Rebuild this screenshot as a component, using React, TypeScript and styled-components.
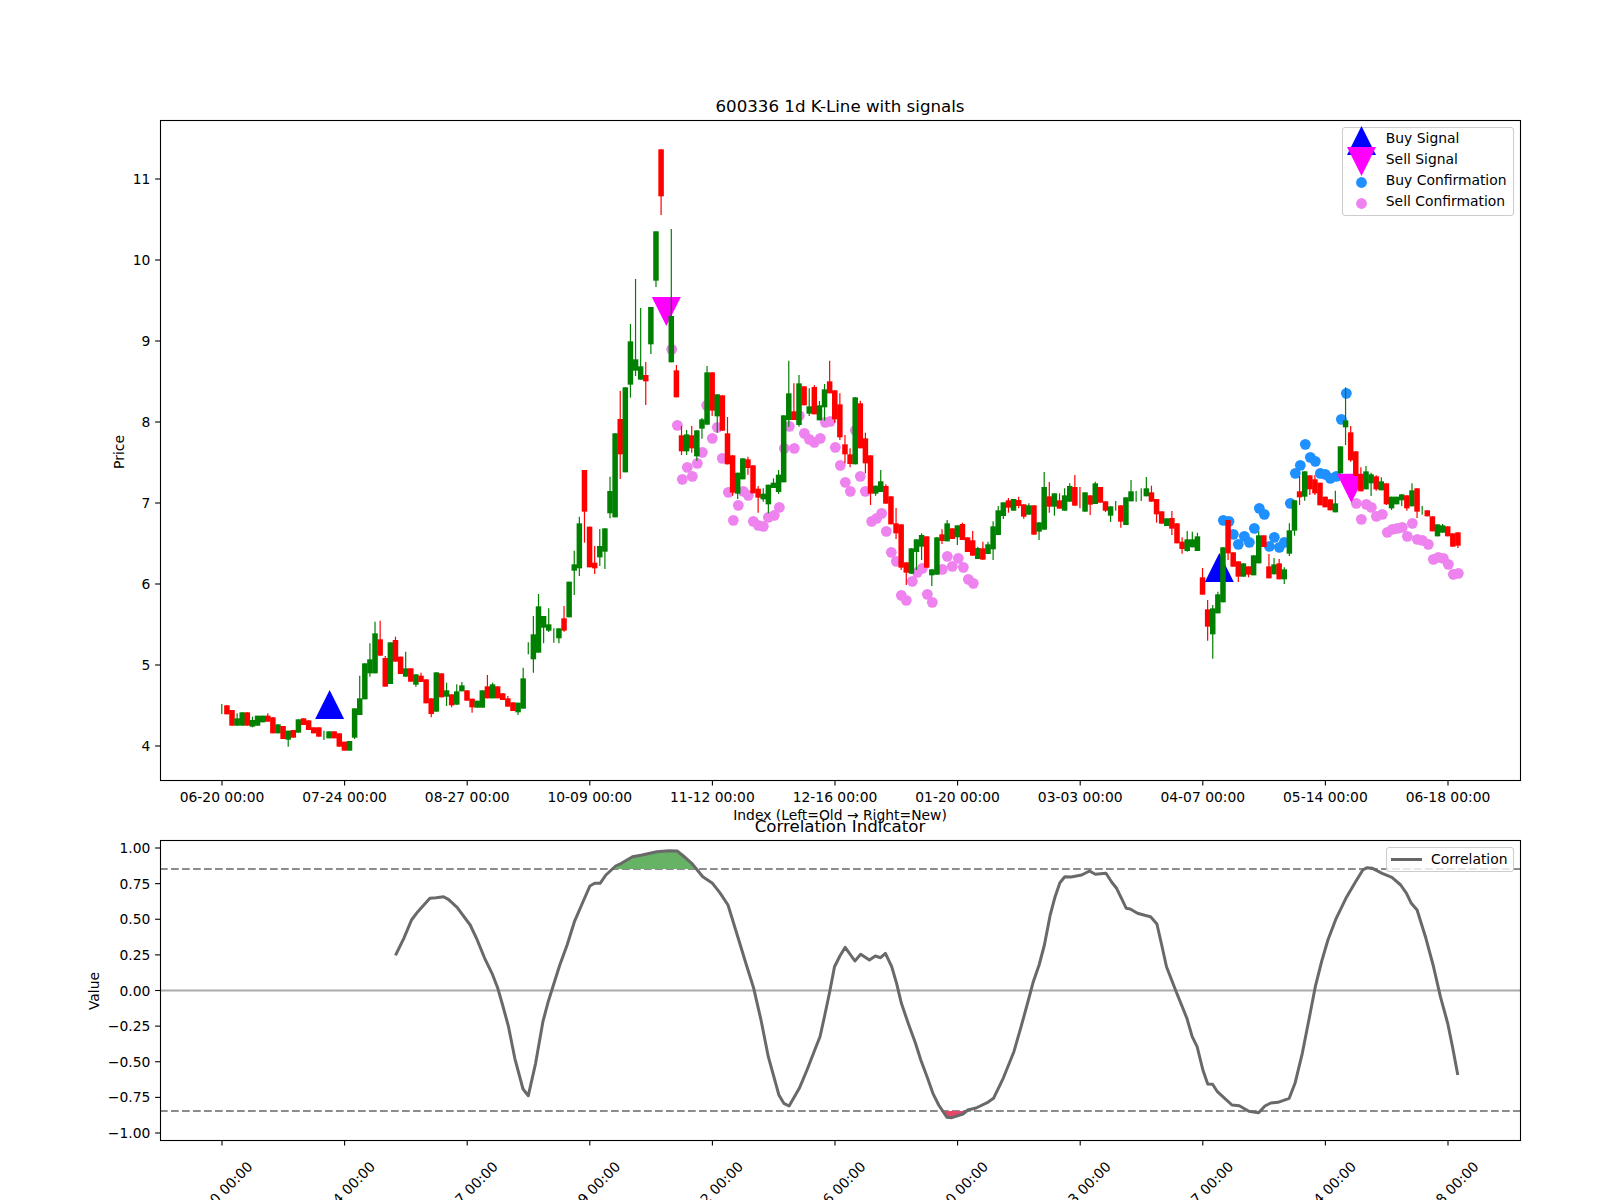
import { FC } from 'react'
import styled, { createGlobalStyle } from 'styled-components'

const GlobalStyle = createGlobalStyle`
  html, body { margin: 0; padding: 0; background: #fff; }
`

const Figure = styled.div`
  width: 1600px;
  height: 1200px;
  overflow: hidden;
  display: flex;
  flex-direction: column;
  align-items: flex-start;
  padding: 95px 0 0 160px;
  box-sizing: border-box;
  font-family: "DejaVu Sans", sans-serif;
  color: #000;
`
const Title = styled.h2<{ $gap?: number }>`
  width: 1360px;
  height: 24px;
  margin: ${p => p.$gap || 0}px 0 1px;
  font-size: 16.67px;
  line-height: 24px;
  font-weight: 400;
  text-align: center;
  white-space: nowrap;
`
const Plot = styled.div<{ $height: number }>`
  position: relative;
  width: 1360px;
  height: ${p => p.$height}px;
  flex: none;
`
const PlotSvg = styled.svg`
  display: block;
  width: 100%;
  height: 100%;
  overflow: visible;
  font-family: "DejaVu Sans", sans-serif;
  font-size: 13.89px;
`
const Legend = styled.div<{ $signals?: boolean }>`
  position: absolute;
  top: 7px;
  right: 6.5px;
  display: grid;
  grid-template-columns: ${p => (p.$signals ? 30 : 31)}px auto;
  grid-auto-rows: 20.85px;
  column-gap: 9px;
  padding: ${p => (p.$signals ? '0 6px 3.5px 4px' : '1px 5px 1px 4px')};
  background: rgba(255, 255, 255, 0.8);
  border: 1px solid #ccc;
  border-radius: 3px;
  font-size: 13.89px;
  line-height: 20.85px;
  white-space: nowrap;
`
const LegendMark = styled.svg`
  width: 31px;
  height: 31px;
  overflow: visible;
  align-self: center;
  margin: 5px 0 0 -1px;
`
const LegendLine = styled.span`
  height: 2.8px;
  background: #666;
  align-self: center;
`

// c, body top, body bottom, wick top, wick bottom (0 = same as the body), read off the picture at 3x
type Candle = [string, number, number, number?, number?]

const trace = (y0: number, rows: Candle[]) =>
  rows.map(([c, bt, bb, wt, wb]) => ({
    color: c === 'r' ? '#ff0000' : '#008000',
    top: y0 + bt / 3,
    bottom: y0 + bb / 3,
    high: y0 + (wt || bt) / 3,
    low: y0 + (wb || bb) / 3,
  }))

const candles = [
  ...trace(480, [
    ['g', 0, 0, 672, 702], ['r', 676, 703], ['r', 690, 737], ['g', 715, 737, 700], ['g', 697, 737],
    ['r', 697, 737], ['g', 720, 740, 710, 742], ['g', 707, 737], ['g', 707, 727], ['r', 707, 725, 700],
    ['r', 712, 760], ['g', 733, 760], ['r', 738, 777], ['g', 752, 779, 0, 800], ['r', 750, 773],
    ['g', 718, 758], ['r', 715, 735], ['r', 721, 750], ['r', 742, 760], ['r', 742, 770],
    ['g', 0, 0, 752, 780], ['g', 754, 775], ['r', 754, 775], ['r', 760, 800], ['r', 785, 812],
    ['g', 783, 812], ['g', 685, 773, 0, 777], ['g', 655, 705, 587], ['g', 550, 658], ['g', 538, 580, 490, 590],
    ['g', 460, 580, 425], ['r', 478, 527, 422], ['r', 534, 620, 528], ['g', 487, 612], ['r', 480, 545, 470],
    ['r', 530, 582], ['g', 565, 590, 515], ['r', 565, 605], ['g', 583, 614, 0, 620], ['r', 587, 606, 578],
    ['r', 598, 670], ['r', 655, 702, 0, 712], ['g', 577, 695], ['r', 580, 652], ['g', 631, 650, 608, 678],
    ['r', 643, 676, 0, 682], ['g', 634, 674, 613], ['g', 616, 634, 606], ['r', 631, 662], ['r', 656, 682, 0, 698],
    ['g', 662, 683], ['g', 631, 683], ['r', 619, 655, 585], ['g', 613, 655, 608], ['r', 619, 655],
    ['r', 640, 660], ['r', 655, 680, 648], ['r', 667, 693], ['g', 668, 697, 0, 705], ['g', 595, 686, 563],
    ['g', 0, 0, 487, 523], ['g', 463, 538, 408, 578], ['g', 379, 518, 342], ['g', 408, 443, 410, 490],
    ['g', 433, 452, 385, 456], ['g', 0, 0, 445, 488], ['g', 445, 475, 0, 490], ['r', 415, 452, 378, 455],
    ['g', 305, 412], ['g', 253, 272, 212, 345], ['g', 130, 265, 110, 288], ['r', -30, 95, 0, 188],
    ['r', 140, 262], ['r', 248, 265, 198, 282], ['g', 198, 232, 147, 258], ['g', 145, 215, 0, 267],
  ]),
  ...trace(130, [
    ['g', 1083, 1150, 1040, 1165], ['g', 910, 1162], ['r', 867, 973, 783, 1047], ['g', 772, 1027],
    ['g', 634, 764, 582, 803], ['g', 688, 722, 447, 738], ['g', 709, 749, 534], ['r', 735, 754, 696, 825],
    ['g', 531, 643, 0, 672], ['g', 304, 452, 0, 471], ['r', 58, 199, 0, 255], ['g', 0, 0, -1, -1],
    ['g', 558, 697, 297], ['r', 721, 802, 705], ['r', 916, 964, 888, 975], ['g', 913, 964, 900, 975],
    ['r', 916, 955, 888, 968], ['g', 901, 979, 0, 992], ['g', 868, 896, 864, 926], ['g', 727, 884, 708],
    ['r', 727, 842, 0, 858], ['g', 793, 859, 0, 908], ['r', 796, 902], ['r', 910, 1003, 861],
    ['r', 976, 1088, 0, 1097], ['g', 1028, 1091, 0, 1107], ['g', 985, 1048], ['r', 988, 1014, 980, 1034],
    ['r', 1006, 1090], ['r', 1076, 1103, 1068, 1148], ['g', 1091, 1108, 1075, 1115], ['g', 1064, 1123, 0, 1150],
    ['g', 1058, 1074, 1045], ['g', 1034, 1086, 1020, 1092], ['g', 856, 1057], ['g', 790, 870, 692, 890],
    ['r', 844, 870, 760], ['g', 760, 885, 735, 890], ['r', 769, 826], ['g', 829, 851, 775, 858],
    ['r', 771, 853, 765], ['g', 826, 871, 813], ['g', 778, 832, 762, 872], ['r', 754, 790, 692],
    ['r', 781, 868, 0, 878], ['r', 823, 922, 790, 930], ['r', 943, 973, 915, 1000], ['r', 973, 1002, 955, 1012],
    ['g', 802, 1003], ['r', 820, 955, 812], ['r', 925, 1000, 908, 1030], ['r', 976, 1091, 0, 1125],
    ['g', 1067, 1091, 0, 1097],
  ]),
  ...trace(340, [
    ['g', 424, 456, 390], ['r', 438, 491, 433], ['r', 469, 553], ['r', 550, 580, 504, 597], ['r', 553, 683, 0, 690],
    ['r', 667, 698, 0, 735], ['g', 625, 701], ['g', 598, 636, 0, 690], ['g', 585, 620, 580, 660], ['r', 589, 683],
    ['g', 688, 706, 0, 738], ['g', 592, 704], ['r', 583, 603, 568, 612], ['g', 550, 604, 540], ['r', 565, 597],
    ['g', 556, 592, 0, 615], ['r', 552, 600, 548], ['r', 592, 636], ['r', 601, 647, 573], ['g', 624, 657, 620],
    ['r', 625, 659, 605], ['g', 613, 642, 605], ['g', 559, 628, 544, 660], ['g', 511, 585, 498], ['g', 487, 528, 0, 537],
    ['r', 481, 503, 474, 518], ['g', 477, 512], ['r', 480, 498, 470, 505], ['r', 493, 530, 0, 536], ['g', 496, 524, 490],
    ['r', 496, 584], ['g', 547, 575, 0, 600], ['g', 441, 569, 396], ['r', 469, 500, 426, 518], ['g', 460, 500, 0, 527],
    ['r', 481, 506, 460], ['g', 466, 512, 445], ['g', 438, 485, 430], ['r', 441, 497, 405], ['r', 0, 0, 441, 505],
    ['g', 457, 515], ['r', 466, 494, 0, 525], ['g', 430, 492, 425], ['r', 441, 488], ['r', 484, 512, 0, 516],
    ['g', 499, 527, 0, 546], ['g', 0, 0, 483, 512], ['r', 496, 545, 0, 563], ['g', 472, 555], ['g', 454, 484, 420],
    ['g', 0, 0, 453, 485], ['g', 0, 0, 445, 483], ['g', 445, 469, 411], ['r', 457, 485, 437], ['r', 477, 523, 0, 548],
    ['r', 514, 551], ['g', 535, 558], ['r', 534, 566, 513, 585], ['r', 550, 610], ['r', 605, 627, 592, 641],
    ['g', 598, 633, 573, 635], ['g', 598, 622, 575], ['g', 589, 633, 578],
  ]),
  ...trace(370, [
    ['r', 622, 674, 594], ['r', 718, 770, 690, 812], ['g', 715, 793, 705, 866], ['g', 673, 730, 665], ['g', 532, 697],
    ['r', 450, 550, 0, 570], ['r', 547, 590], ['r', 574, 620, 0, 636], ['g', 580, 620], ['r', 589, 614, 0, 622],
    ['g', 556, 616], ['g', 496, 580, 484], ['r', 496, 531], ['r', 589, 625, 552], ['g', 583, 613, 564],
    ['r', 580, 628, 567], ['g', 598, 628, 592, 642], ['g', 481, 551, 460, 558], ['g', 391, 482, 0, 497],
    ['r', 364, 382, 318, 405], ['g', 304, 380, 0, 392], ['r', 316, 358, 0, 375], ['r', 328, 370, 315, 375],
    ['r', 338, 406], ['r', 380, 412], ['r', 388, 421], ['g', 400, 427, 362], ['g', 229, 310],
    ['g', 151, 172, 52, 225], ['r', 187, 271, 168, 275], ['r', 244, 318], ['r', 313, 364, 292], ['g', 304, 358, 288],
    ['g', 313, 340, 308, 378], ['r', 319, 358, 316, 362], ['g', 334, 361, 322], ['r', 340, 403, 0, 405],
    ['g', 380, 415, 0, 420], ['g', 380, 403], ['g', 373, 391, 0, 408], ['r', 376, 415, 0, 422], ['g', 361, 409, 340],
    ['r', 355, 425, 0, 444], ['g', 0, 0, 408, 434], ['r', 421, 439], ['r', 439, 484], ['g', 463, 499],
    ['g', 466, 488, 462], ['r', 469, 499], ['r', 490, 530], ['r', 487, 527, 0, 534],
  ]),
]

const dots = (x0: number, y0: number, pts: number[][]) => pts.map(([x, y]) => [x0 + x / 3, y0 + y / 3])

const sellDots = [
  ...dots(580, 130, [
    [275, 658], [292, 886], [322, 1012], [307, 1048], [337, 1039], [352, 1000], [367, 967], [397, 925], [412, 892],
    [380, 826], [427, 985], [445, 1087], [475, 1126], [460, 1171], [490, 1084], [505, 1096], [520, 1174], [535, 1186],
    [550, 1189], [565, 1162], [583, 1156], [598, 1132], [613, 955], [643, 955], [628, 889], [658, 857], [673, 910],
    [688, 928], [703, 937], [721, 925], [736, 877], [751, 874], [766, 952], [781, 1006], [796, 1057], [811, 1084],
    [841, 1039], [826, 901], [856, 1084], [875, 1174], [890, 1165], [905, 1150],
  ]),
  ...dots(860, 340, [
    [79, 574], [94, 637], [109, 664], [124, 766], [139, 781], [157, 724], [172, 697], [187, 685], [202, 763], [217, 787],
    [247, 688], [262, 649], [277, 679], [295, 655], [310, 682], [325, 718], [340, 730],
  ]),
  ...dots(1180, 370, [
    [529, 400], [544, 448], [559, 403], [574, 412], [589, 439], [607, 433], [622, 487], [637, 478], [652, 475], [667, 472],
    [682, 499], [697, 460], [712, 508], [727, 511], [745, 523], [760, 568], [775, 562], [790, 565], [805, 583], [820, 613],
    [835, 610],
  ]),
]

const buyDots = dots(1180, 370, [
  [130, 451], [147, 454], [160, 493], [175, 523], [193, 499], [208, 517], [223, 475], [238, 415], [253, 433], [268, 529],
  [283, 502], [298, 532], [313, 517], [331, 400], [346, 310], [361, 286], [376, 223], [391, 262], [406, 274], [421, 310],
  [436, 313], [451, 325], [469, 319], [484, 148], [499, 70],
])

const curve = (x0: number, pts: number[][]) => pts.map(([x, y]) => [x0 + x / 2.0632, 770 + y / 3])

const correlation = [
  ...curve(80, [
    [651, 556], [668, 505], [684, 450], [697, 425], [722, 385], [735, 383], [750, 380], [760, 388], [778, 412], [805, 465],
    [818, 505], [835, 565], [850, 610], [862, 655], [872, 705], [884, 770], [897, 865], [914, 957], [925, 977], [940, 880],
    [955, 755], [966, 695], [978, 640], [990, 585], [1005, 525], [1020, 455], [1035, 405], [1052, 348], [1062, 340],
    [1073, 340], [1085, 315], [1105, 288], [1117, 280], [1140, 260], [1160, 255], [1190, 245], [1215, 242], [1232, 243],
    [1245, 258], [1262, 280], [1285, 320], [1305, 340], [1320, 368], [1337, 405], [1355, 490], [1375, 585], [1390, 655],
    [1405, 750], [1420, 860], [1442, 975], [1452, 1000], [1463, 1008], [1484, 955], [1500, 900], [1520, 825],
  ]),
  ...curve(820, [
    [0, 800], [10, 735], [20, 665], [30, 590], [41, 558], [52, 532], [72, 573], [84, 553], [102, 570], [114, 558], [125, 563],
    [135, 550], [148, 590], [158, 640], [168, 700], [182, 760], [197, 820], [208, 870], [222, 925], [233, 970], [245, 1005],
    [262, 1042], [272, 1043], [295, 1032], [305, 1020], [322, 1014], [345, 998], [358, 985], [378, 925], [400, 845],
    [415, 770], [430, 690], [440, 635], [452, 585], [463, 525], [475, 435], [485, 380], [495, 338], [505, 320], [518, 321],
    [540, 315], [556, 303], [568, 313], [590, 310], [602, 337], [612, 355], [622, 385], [632, 415], [640, 417], [655, 430],
    [670, 436], [682, 440], [695, 462], [705, 525], [715, 590], [735, 665], [757, 745], [768, 800], [778, 830], [790, 900],
    [800, 942], [810, 943], [820, 965], [835, 985], [850, 1005], [865, 1007], [885, 1024], [905, 1028], [918, 1008],
    [930, 999], [945, 997], [968, 985], [980, 940], [995, 850], [1010, 740], [1022, 650], [1035, 575], [1048, 510],
    [1065, 445], [1085, 385], [1105, 335], [1120, 300], [1128, 293], [1140, 295], [1160, 310], [1180, 322], [1198, 345],
    [1210, 370], [1220, 400], [1232, 420], [1250, 505], [1265, 585], [1280, 680], [1295, 760], [1305, 830], [1316, 915],
  ]),
]

const toPoints = (pts: number[][]) => pts.map(([x, y]) => `${x.toFixed(1)},${y.toFixed(1)}`).join(' ')

const overBand = [[614.6, 869], ...correlation.filter(([x, y]) => x > 610 && x < 700 && y < 869), [695.5, 869]]
const underBand = [[944.5, 1111], ...correlation.filter(([x, y]) => x > 940 && x < 970 && y > 1111), [964.5, 1111]]

const dateLabels = [
  '06-20 00:00', '07-24 00:00', '08-27 00:00', '10-09 00:00', '11-12 00:00', '12-16 00:00',
  '01-20 00:00', '03-03 00:00', '04-07 00:00', '05-14 00:00', '06-18 00:00',
]
const tickX = (n: number) => 222 + n * 122.6

const priceY = (v: number) => 179 + (11 - v) * 81
const prices = [4, 5, 6, 7, 8, 9, 10, 11]
const values = [1, 0.75, 0.5, 0.25, 0, -0.25, -0.5, -0.75, -1]
const valueY = (v: number) => 990.5 - v * 142.5
const valueLabel = (v: number) => (v < 0 ? '\u2212' : '') + Math.abs(v).toFixed(2)

const SEGMENT = 5.108

const BuyMark: FC<{ x: number; y: number }> = ({ x, y }) => (
  <polygon points={`${x},${y} ${x - 14.5},${y + 29} ${x + 14.5},${y + 29}`} fill="#0000ff" />
)
const SellMark: FC<{ x: number; y: number }> = ({ x, y }) => (
  <polygon points={`${x},${y} ${x - 14.5},${y - 29} ${x + 14.5},${y - 29}`} fill="#ff00ff" />
)

const YTick: FC<{ y: number; label: string }> = ({ y, label }) => (
  <g>
    <line x1={155.1} x2={160} y1={y} y2={y} stroke="#000" strokeWidth={1.1} />
    <text x={150.3} y={y + 5} textAnchor="end">{label}</text>
  </g>
)

const Frame: FC<{ x: number; y: number; w: number; h: number }> = ({ x, y, w, h }) => (
  <rect x={x} y={y} width={w} height={h} fill="none" stroke="#000" strokeWidth={1.1} />
)

const PricePanel: FC = () => (
  <Plot $height={660}>
    <PlotSvg viewBox="160 120 1360 660">
      {sellDots.map(([x, y], i) => <circle key={i} cx={x} cy={y} r={5.4} fill="#ee82ee" />)}
      {buyDots.map(([x, y], i) => <circle key={i} cx={x} cy={y} r={5.4} fill="#1e90ff" />)}
      <BuyMark x={329.6} y={690} />
      <BuyMark x={1219.3} y={553} />
      <SellMark x={666.3} y={326} />
      <SellMark x={1351.3} y={502.8} />
      {candles.map((c, i) => {
        const x = 221.8 + SEGMENT * i
        return (
          <g key={i}>
            <line x1={x} x2={x} y1={c.high} y2={c.low} stroke={c.color} strokeWidth={1.2} />
            {c.bottom > c.top && (
              <rect x={x - 2.75} y={c.top} width={5.5} height={c.bottom - c.top} fill={c.color} />
            )}
          </g>
        )
      })}
      <Frame x={160.5} y={120.5} w={1360} h={660} />
      {prices.map(v => <YTick key={v} y={priceY(v)} label={String(v)} />)}
      {dateLabels.map((d, n) => (
        <g key={d}>
          <line x1={tickX(n)} x2={tickX(n)} y1={780} y2={785.4} stroke="#000" strokeWidth={1.1} />
          <text x={tickX(n)} y={801.5} textAnchor="middle">{d}</text>
        </g>
      ))}
      <text x={840} y={820} textAnchor="middle">Index (Left=Old → Right=New)</text>
      <text transform="translate(124 452) rotate(-90)" textAnchor="middle">Price</text>
    </PlotSvg>
    <Legend $signals>
      <LegendMark viewBox="0 0 31 31"><polygon points="15.5,1 1,30 30,30" fill="#0000ff" /></LegendMark>
      <span>Buy Signal</span>
      <LegendMark viewBox="0 0 31 31"><polygon points="15.5,30 1,1 30,1" fill="#ff00ff" /></LegendMark>
      <span>Sell Signal</span>
      <LegendMark viewBox="0 0 31 31"><circle cx={15.5} cy={15.5} r={5.4} fill="#1e90ff" /></LegendMark>
      <span>Buy Confirmation</span>
      <LegendMark viewBox="0 0 31 31"><circle cx={15.5} cy={15.5} r={5.4} fill="#ee82ee" /></LegendMark>
      <span>Sell Confirmation</span>
    </Legend>
  </Plot>
)

const CorrelationPanel: FC = () => (
  <Plot $height={300}>
    <PlotSvg viewBox="160 840 1360 300">
      <line x1={160} x2={1520} y1={990.5} y2={990.5} stroke="#aaa" strokeWidth={2.08} />
      <line x1={160} x2={1520} y1={869} y2={869} stroke="#8c8c8c" strokeWidth={2.08} strokeDasharray="7.7 3.3" />
      <line x1={160} x2={1520} y1={1111} y2={1111} stroke="#8c8c8c" strokeWidth={2.08} strokeDasharray="7.7 3.3" />
      <polygon points={toPoints(overBand)} fill="#66b366" />
      <polygon points={toPoints(underBand)} fill="#e8476a" />
      <polyline points={toPoints(correlation)} fill="none" stroke="#696969" strokeWidth={3} strokeLinejoin="round" />
      <Frame x={160.5} y={840.5} w={1360} h={300} />
      {values.map(v => <YTick key={v} y={valueY(v)} label={valueLabel(v)} />)}
      {dateLabels.map((d, n) => (
        <g key={d}>
          <line x1={tickX(n)} x2={tickX(n)} y1={1140} y2={1145.4} stroke="#000" strokeWidth={1.1} />
          <text transform={`translate(${tickX(n) - 2} 1194) rotate(-45)`} y={5} textAnchor="middle">{d}</text>
        </g>
      ))}
      <text transform="translate(99 991) rotate(-90)" textAnchor="middle">Value</text>
    </PlotSvg>
    <Legend>
      <LegendLine />
      <span>Correlation</span>
    </Legend>
  </Plot>
)

const App: FC = () => (
  <Figure>
    <GlobalStyle />
    <Title>600336 1d K-Line with signals</Title>
    <PricePanel />
    <Title $gap={35}>Correlation Indicator</Title>
    <CorrelationPanel />
  </Figure>
)

export default App
